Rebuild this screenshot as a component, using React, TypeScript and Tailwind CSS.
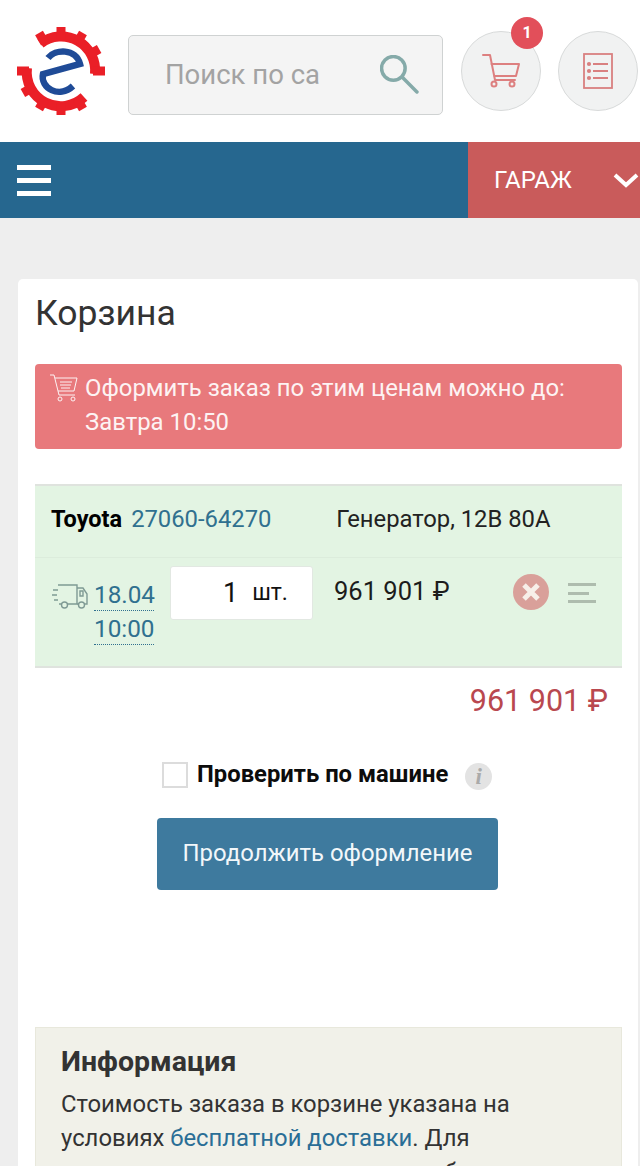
import React from "react";

function Logo() {
  const cx = 61, cy = 64;
  const teeth: number[] = [-30, 0, 30, 60, 90, 150, 180, 210, 240, 270];
  return (
    <svg width="90" height="90" viewBox="16 19 90 90" className="shrink-0">
      <path d="M 40.5 36.5 A 34 34 0 0 1 95 67" fill="none" stroke="#ea1f27" strokeWidth="10" />
      <path d="M 84 90 A 34 34 0 0 1 27 61" fill="none" stroke="#ea1f27" strokeWidth="10" />
      {teeth.map((a) => (
        <rect key={a} x={cx - 4.5} y={cy - 44} width="9" height="12" fill="#ea1f27" transform={`rotate(${a} ${cx} ${cy})`} />
      ))}
      <path d="M 48 51 C 55 42 76 41 80 57 L 43 67 C 40 81 59 92 73 79" fill="none" stroke="#1f4b97" strokeWidth="6.5" />
    </svg>
  );
}

function Cart() {
  return (
    <svg width="38" height="36" viewBox="0 0 38 36" fill="none" stroke="#dd8080" strokeWidth="2" strokeLinecap="round" strokeLinejoin="round">
      <path d="M1 2h7l5 25h20" />
      <path d="M9.5 11H37l-3 12H12.5" />
      <circle cx="12" cy="31" r="2.5" />
      <circle cx="30" cy="31" r="2.5" />
    </svg>
  );
}

export default function App() {
  return (
    <div className="h-[1166px] overflow-hidden bg-[#eeeeee] font-['Roboto',sans-serif] text-[#111]">
      <header className="flex h-[142px] items-center bg-white pl-4 pr-0">
        <Logo />
        <div className="ml-[22px] mt-[8px] flex h-[80px] w-[315px] shrink-0 items-center rounded-[5px] border border-[#cfd2d2] bg-[#f4f4f4] pl-9 pr-[23px]">
          <div className="w-[156px] overflow-hidden whitespace-nowrap text-[27.5px] text-[#a3a3a3]">Поиск по сайту</div>
          <svg width="39" height="39" viewBox="0 0 38 38" fill="none" stroke="#85aaa9" strokeWidth="3.4" strokeLinecap="round" className="mb-[2px] ml-auto">
            <circle cx="13" cy="13" r="11.5" />
            <path d="M21.5 21.5L36 36" />
          </svg>
        </div>
        <div className="relative ml-[18px] flex h-[80px] w-[80px] shrink-0 items-center justify-center rounded-full border border-[#d8dada] bg-[#f1f2f2]">
          <Cart />
          <span className="absolute right-[-3px] top-[-15px] flex h-8 w-8 items-center justify-center rounded-full bg-[#e24f5a] text-[16px] font-bold text-white">1</span>
        </div>
        <div className="ml-[17px] flex h-[80px] w-[80px] shrink-0 items-center justify-center rounded-full border border-[#d8dada] bg-[#f1f2f2]">
          <svg width="30" height="36" viewBox="0 0 30 36" fill="none" stroke="#d98080" strokeWidth="1.8">
            <rect x="1" y="1" width="28" height="34" />
            <path d="M10 11h15M10 18h15M10 25h15" />
            <circle cx="6" cy="11" r="1.2" fill="#d98080" />
            <circle cx="6" cy="18" r="1.2" fill="#d98080" />
            <circle cx="6" cy="25" r="1.2" fill="#d98080" />
          </svg>
        </div>
      </header>

      <nav className="flex h-[76px] bg-[#26678f]">
        <div className="flex flex-1 items-center pl-[17px]">
          <div className="flex w-[34px] flex-col gap-[8px]">
            <div className="h-[5px] bg-white" />
            <div className="h-[5px] bg-white" />
            <div className="h-[5px] bg-white" />
          </div>
        </div>
        <div className="flex w-[172px] items-center bg-[#c95b5b] pl-[26px] text-[24px] text-white">
          <span>ГАРАЖ</span>
          <svg width="26" height="16" viewBox="0 0 26 16" fill="none" stroke="white" strokeWidth="4" className="ml-auto mr-[1px]">
            <path d="M2 3l11 10L24 3" />
          </svg>
        </div>
      </nav>

      <main className="pl-[18px] pr-[2px] pt-[61px]">
        <section className="rounded-t-[5px] bg-white pl-[17px] pr-[16px] pt-[13px]">
          <h1 className="text-[35.5px] leading-[42px] text-[#333]">Корзина</h1>

          <div className="mt-[30px] flex h-[85px] rounded-[4px] bg-[#e8797c] pl-[14px] pt-[7px] text-[23.9px] leading-[34px] text-[#fdf3f3]">
            <svg width="30" height="30" viewBox="0 0 30 30" fill="none" stroke="#fdf3f3" strokeWidth="1" className="mr-[6px] mt-[2px] shrink-0">
              <path d="M1 2h4l5 20h16" />
              <path d="M6 5h22l-3 13H9" />
              <path d="M11 9h12M11 12h11M12 15h9" />
              <circle cx="11" cy="26" r="2" />
              <circle cx="24" cy="26" r="2" />
            </svg>
            <div>
              Оформить заказ по этим ценам можно до:
              <br />
              Завтра 10:50
            </div>
          </div>

          <div className="mt-[35px] border-y-2 border-[#dfe3de] bg-[#e3f4e3]">
            <div className="flex h-[72px] items-center border-b border-[#dcecdc] pb-[3px] pl-[16px] text-[23.8px]">
              <b className="text-[23.5px] text-black">Toyota</b>
              <span className="ml-[9px] w-[205px] text-[#30708f]">27060-64270</span>
              <span className="text-[#222]">Генератор, 12В 80А</span>
            </div>
            <div className="flex h-[108px]">
              <svg width="36" height="28" viewBox="0 0 36 28" fill="none" stroke="#7f9a94" strokeWidth="1.4" className="ml-[17px] mt-[24px] shrink-0">
                <path d="M6 3h19v19H15M10 22H7M6 8H1M5 13H0M6 18H2" />
                <path d="M25 6h6l4 6v10h-3M27 22h-2" />
                <path d="M28 9h3v5h-3z" />
                <circle cx="12.5" cy="23" r="3" />
                <circle cx="29.5" cy="23" r="3" />
              </svg>
              <div className="ml-[6px] mt-[19px] w-[60px] shrink-0 text-[24.3px] leading-[35px] text-[#30708f]">
                <div className="h-[34px] border-b border-dotted border-[#30708f]">18.04</div>
                <div className="h-[34px] border-b border-dotted border-[#30708f]">10:00</div>
              </div>
              <div className="ml-[16px] mt-[8px] flex h-[54px] w-[143px] shrink-0 items-center rounded-[3px] border border-[#e2e8e2] bg-white pl-[52px]">
                <span className="text-[27px]">1</span>
                <span className="ml-[14px] text-[23px]">шт.</span>
              </div>
              <div className="ml-[21px] mt-[16px] w-[179px] shrink-0 text-[25.5px] leading-[34px] text-[#1c1c1c]">
                961 901 ₽
              </div>
              <div className="mt-[16px] flex h-9 w-9 shrink-0 items-center justify-center rounded-full bg-[#d9a09a]">
                <svg width="20" height="20" viewBox="0 0 20 20" stroke="#f7efe9" strokeWidth="5">
                  <path d="M3 3l14 14M17 3L3 17" />
                </svg>
              </div>
              <div className="ml-[19px] mt-[25px] flex h-[20px] w-[28px] shrink-0 flex-col justify-between">
                <div className="h-[3px] bg-[#aebcae]" />
                <div className="h-[3px] w-[21px] bg-[#aebcae]" />
                <div className="h-[3px] bg-[#aebcae]" />
              </div>
            </div>
          </div>

          <div className="mr-[14px] mt-[13px] text-right text-[30.5px] leading-[40px] text-[#b9484f]">
            961 901 ₽
          </div>

          <div className="mt-[36px] flex items-center pl-[127px]">
            <div className="h-[26px] w-[26px] border-2 border-[#dcdcdc] bg-white" />
            <b className="ml-[9px] text-[23.8px] text-[#0c0c0c]">Проверить по машине</b>
            <span className="ml-[17px] mt-[4px] flex h-[27px] w-[27px] items-center justify-center rounded-full bg-[#e3e3e3] font-['Liberation_Serif',serif] text-[23px] font-bold italic text-[#aaa]">i</span>
          </div>

          <div className="ml-[122px] mt-[25px] flex h-[72px] w-[341px] items-center justify-center rounded-[4px] bg-[#3e7a9e] text-[23.9px] text-[#f2f7fa]">
            Продолжить оформление
          </div>

          <div className="mt-[137px] border border-[#e8e8dc] bg-[#f1f1e9] pl-[25px] pt-[14px]">
            <h2 className="text-[28.5px] font-bold leading-[40px] text-[#333]">Информация</h2>
            <p className="mt-[5px] w-[480px] text-[23.85px] leading-[34px] text-[#333]">
              Стоимость заказа в корзине указана на условиях <span className="text-[#2a6e96]">бесплатной доставки</span>. Для уточнения стоимости с учетом выбора способа
            </p>
          </div>
        </section>
      </main>
    </div>
  );
}
